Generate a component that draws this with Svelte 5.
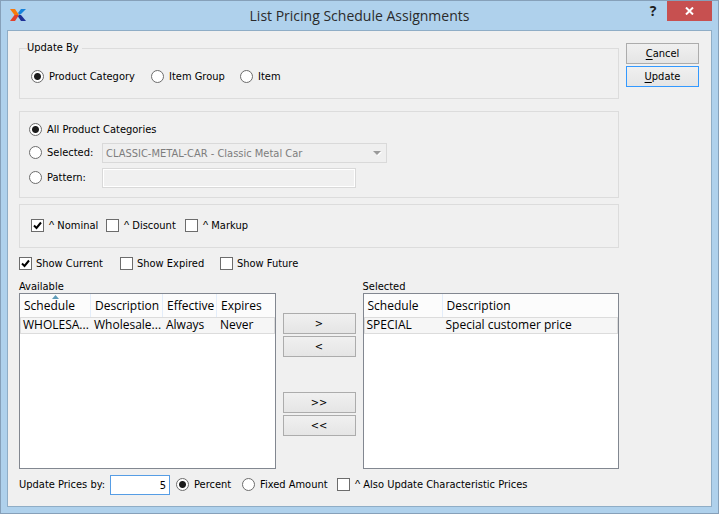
<script>
  let updateBy = $state('category');
  let scope = $state('all');
  let pattern = $state('');
  let amount = $state('5');
  let unit = $state('percent');
  let characteristic = $state(false);
  let nominal = $state(true);
  let discount = $state(false);
  let markup = $state(false);
  let current = $state(true);
  let expired = $state(false);
  let future = $state(false);
</script>

<div class="window">
  <header>
    <svg class="logo" width="16" height="12" viewBox="0 0 16 12" aria-hidden="true">
      <path d="M0 0h5L9 6H4.500z" fill="#f77a0b" />
      <path d="M11 0h5l-4.500 4.500L9.500 6 8 4z" fill="#1583dc" />
      <path d="M4.500 6H9L5 12H0z" fill="#e2412c" />
      <path d="M9 6h2l5 6h-5L8 7.500z" fill="#1d2f96" />
    </svg>
    <h1>List Pricing Schedule Assignments</h1>
    <div class="controls">
      <button class="help" aria-label="Help">?</button>
      <button class="close" aria-label="Close">
        <svg width="9" height="8" viewBox="0 0 9 8" aria-hidden="true">
          <path d="M1 .5l7 7M8 .5L1 7.500" stroke="#fff" stroke-width="2" />
        </svg>
      </button>
    </div>
  </header>

  <main>
    <div class="left">
      <fieldset class="by">
        <legend>Update By</legend>
        <label><input type="radio" value="category" bind:group={updateBy} />Product Category</label>
        <label><input type="radio" value="group" bind:group={updateBy} />Item Group</label>
        <label><input type="radio" value="item" bind:group={updateBy} />Item</label>
      </fieldset>

      <div class="panel scope">
        <label class="wide"><input type="radio" value="all" bind:group={scope} />All Product Categories</label>
        <label><input type="radio" value="selected" bind:group={scope} />Selected:</label>
        <div class="combo">
          <select aria-label="Selected category" disabled={scope !== 'selected'}>
            <option>CLASSIC-METAL-CAR - Classic Metal Car</option>
          </select>
          <svg width="9" height="5" viewBox="0 0 9 5" aria-hidden="true"><path d="M1 1h8L5 5z" fill="#fff" /><path d="M0 0h8L4 4z" fill="#9a9a9a" /></svg>
        </div>
        <label><input type="radio" value="pattern" bind:group={scope} />Pattern:</label>
        <input class="field pattern" type="text" aria-label="Pattern" bind:value={pattern} disabled={scope !== 'pattern'} />
      </div>

      <div class="panel types">
        <label><input type="checkbox" bind:checked={nominal} /><span><i>^</i> Nominal</span></label>
        <label><input type="checkbox" bind:checked={discount} /><span><i>^</i> Discount</span></label>
        <label><input type="checkbox" bind:checked={markup} /><span><i>^</i> Markup</span></label>
      </div>

      <div class="show">
        <label><input type="checkbox" bind:checked={current} />Show Current</label>
        <label><input type="checkbox" bind:checked={expired} />Show Expired</label>
        <label><input type="checkbox" bind:checked={future} />Show Future</label>
      </div>

      <div class="lists">
        <section>
          <h2 id="available">Available</h2>
          <div class="list">
            <table class="four" aria-labelledby="available">
              <thead>
                <tr>
                  <th aria-sort="ascending">
                    <svg class="sort" width="7" height="4" viewBox="0 0 7 4" aria-hidden="true"><path d="M0 4L3.500 0 7 4z" fill="#5d9bb8" /></svg>
                    Schedule
                  </th>
                  <th>Description</th><th>Effective</th><th>Expires</th>
                </tr>
              </thead>
              <tbody>
                <tr><td>WHOLESA...</td><td>Wholesale...</td><td>Always</td><td>Never</td></tr>
              </tbody>
            </table>
          </div>
        </section>
        <div class="move">
          <button class="push">&gt;</button>
          <button class="push">&lt;</button>
          <button class="push all">&gt;&gt;</button>
          <button class="push">&lt;&lt;</button>
        </div>
        <section>
          <h2 id="selected">Selected</h2>
          <div class="list">
            <table class="two" aria-labelledby="selected">
              <thead><tr><th>Schedule</th><th>Description</th></tr></thead>
              <tbody><tr><td>SPECIAL</td><td>Special customer price</td></tr></tbody>
            </table>
          </div>
        </section>
      </div>

      <div class="prices">
        <label for="amount">Update Prices by:</label>
        <input id="amount" class="field" type="text" bind:value={amount} />
        <label><input type="radio" value="percent" bind:group={unit} />Percent</label>
        <label><input type="radio" value="fixed" bind:group={unit} />Fixed Amount</label>
        <label><input type="checkbox" bind:checked={characteristic} /><span><i>^</i> Also Update Characteristic Prices</span></label>
      </div>
    </div>

    <div class="actions">
      <button class="push"><u>C</u>ancel</button>
      <button class="push default"><u>U</u>pdate</button>
    </div>
  </main>
</div>

<style>
  :global(body) { margin: 0; }
  * { box-sizing: border-box; }
  .window {
    display: flex;
    flex-direction: column;
    min-height: 100vh;
    padding: 0 6px 6px;
    border: 1px solid #86a0b9;
    background: #afd1ec;
    color: #000;
    font: 11px/14px "DejaVu Sans Condensed", "DejaVu Sans", sans-serif;
  }
  header {
    display: grid;
    grid-template-columns: 1fr auto 1fr;
    height: 29px;
  }
  .logo { margin: 8px 0 0 3px; }
  h1 {
    margin: 0;
    font: 14px/29px "Open Sans", "Noto Sans", sans-serif;
    color: #2b2b2b;
    white-space: nowrap;
  }
  .controls {
    display: flex;
    justify-content: flex-end;
    gap: 4px;
  }
  .controls button {
    height: 20px;
    padding: 0;
    border: 0;
    background: none;
    color: #1e1e1e;
    font: bold 14px/20px "Open Sans", sans-serif;
  }
  .controls .help { width: 20px; }
  .controls .close {
    display: grid;
    place-items: center;
    width: 45px;
    background: #c75050;
  }
  main {
    flex: 1;
    display: flex;
    gap: 7px;
    padding: 10px 12px 11px 11px;
    border: 1px solid #8fadc6;
    background: #f0f0f0;
  }
  .left {
    flex: 1;
    min-width: 0;
    display: flex;
    flex-direction: column;
  }
  label {
    display: flex;
    align-items: flex-start;
    gap: 5px;
    white-space: nowrap;
  }
  /* A caret marks the options explained in the help text. */
  i {
    font-family: "Liberation Sans", Arial, sans-serif;
    font-style: normal;
    line-height: 0;
  }
  input[type="radio"], input[type="checkbox"] {
    appearance: none;
    flex: none;
    width: 13px;
    height: 13px;
    margin: 0;
    border: 1px solid #6c6c6c;
    background: #fff center / 100% 100% no-repeat;
  }
  input[type="radio"] { border-radius: 50%; }
  input[type="radio"]:checked { background-image: radial-gradient(circle, #1c1c1c 3px, transparent 4px); }
  input[type="checkbox"]:checked {
    background-image: url("data:image/svg+xml,%3Csvg xmlns='http://www.w3.org/2000/svg' viewBox='0 0 11 11'%3E%3Cpath d='M2 5.500L4.500 8 9 2.500' fill='none' stroke='%23000' stroke-width='2'/%3E%3C/svg%3E");
  }
  fieldset, .panel {
    margin: 0;
    border: 1px solid #dcdcdc;
  }
  fieldset.by {
    display: grid;
    grid-template-columns: 120px 89px 1fr;
    height: 58px;
    padding: 15px 11px 0;
    align-content: start;
    min-width: 0;
  }
  legend {
    margin-left: -4px;
    padding: 0 3px 0 0;
  }
  .panel.scope {
    display: grid;
    grid-template-columns: 73px 1fr;
    row-gap: 5px;
    align-items: center;
    margin-top: 12px;
    padding: 11px 9px 9px;
  }
  .wide { grid-column: span 2; height: 15px; }
  .combo {
    position: relative;
    width: 285px;
    height: 20px;
  }
  .combo svg {
    position: absolute;
    top: 8px;
    right: 5px;
  }
  select {
    appearance: none;
    width: 100%;
    height: 20px;
    padding: 2px 3px 0;
    border: 1px solid #d9d9d9;
    border-radius: 0;
    background: #efefef;
    color: #000;
    font: inherit;
  }
  select:disabled { color: #7d7d7d; opacity: 1; }
  .field {
    height: 20px;
    padding: 1px 3px 0;
    border: 1px solid #569de5;
    background: #fff;
    color: #000;
    font: inherit;
  }
  .field:disabled {
    border-color: #d9d9d9;
    background: #f0f0f0;
    box-shadow: inset 0 0 0 1px #fff;
  }
  .pattern { width: 254px; }
  .panel.types {
    display: grid;
    grid-template-columns: 75px 79px 1fr;
    margin-top: 6px;
    padding: 14px 11px;
  }
  .show {
    display: grid;
    grid-template-columns: 101px 100px 1fr;
    margin-top: 9px;
  }
  .show label { gap: 4px; }
  .lists {
    flex: 1;
    display: grid;
    grid-template-columns: 1fr 73px 1fr;
    gap: 7px;
    margin-top: 9px;
  }
  section {
    display: flex;
    flex-direction: column;
    min-width: 0;
  }
  h2 {
    margin: 0;
    font: inherit;
    line-height: 13px;
  }
  .list {
    flex: 1;
    border: 1px solid #828790;
    background: #fff;
  }
  table {
    width: 100%;
    border-collapse: separate;
    border-spacing: 0;
    table-layout: fixed;
    font: 12px/14px "Open Sans", "Noto Sans", sans-serif;
  }
  th, td {
    text-align: left;
    white-space: nowrap;
  }
  th {
    position: relative;
    height: 23px;
    padding: 0 0 0 4px;
    border-right: 1px solid #e3edfa;
    background: #fcfcfc;
    font-weight: normal;
  }
  th:last-child { border-right: 0; }
  td {
    padding: 0 0 1px 3px;
    border: solid #dcdcdc;
    border-width: 1px 0;
    background: #f6f6f6;
  }
  td:first-child { border-left-width: 1px; padding-left: 2px; }
  td:last-child { border-right-width: 1px; }
  .four th:nth-child(1) { width: 71px; }
  .four th:nth-child(2) { width: 72px; }
  .four th:nth-child(3) { width: 54px; }
  .two th:nth-child(1) { width: 79px; }
  .sort {
    position: absolute;
    top: 1px;
    left: 32px;
  }
  .push {
    width: 73px;
    height: 21px;
    padding: 0;
    border: 1px solid #acacac;
    background: linear-gradient(#f0f0f0, #e5e5e5);
    color: #000;
    font: inherit;
  }
  .push.default { border-color: #3399ff; }
  .push u { text-underline-offset: 2px; }
  .move {
    display: flex;
    flex-direction: column;
    gap: 2px;
    padding-top: 33px;
  }
  .move .all { margin-top: 33px; }
  .prices {
    display: flex;
    align-items: center;
    margin-top: 6px;
  }
  .prices > label:first-child { width: 91px; }
  #amount {
    width: 60px;
    margin-right: 6px;
    text-align: right;
  }
  .prices label:nth-of-type(2) { width: 66px; }
  .prices label:nth-of-type(3) { width: 95px; }
  .actions {
    display: flex;
    flex-direction: column;
    gap: 2px;
    padding-top: 2px;
  }
</style>
